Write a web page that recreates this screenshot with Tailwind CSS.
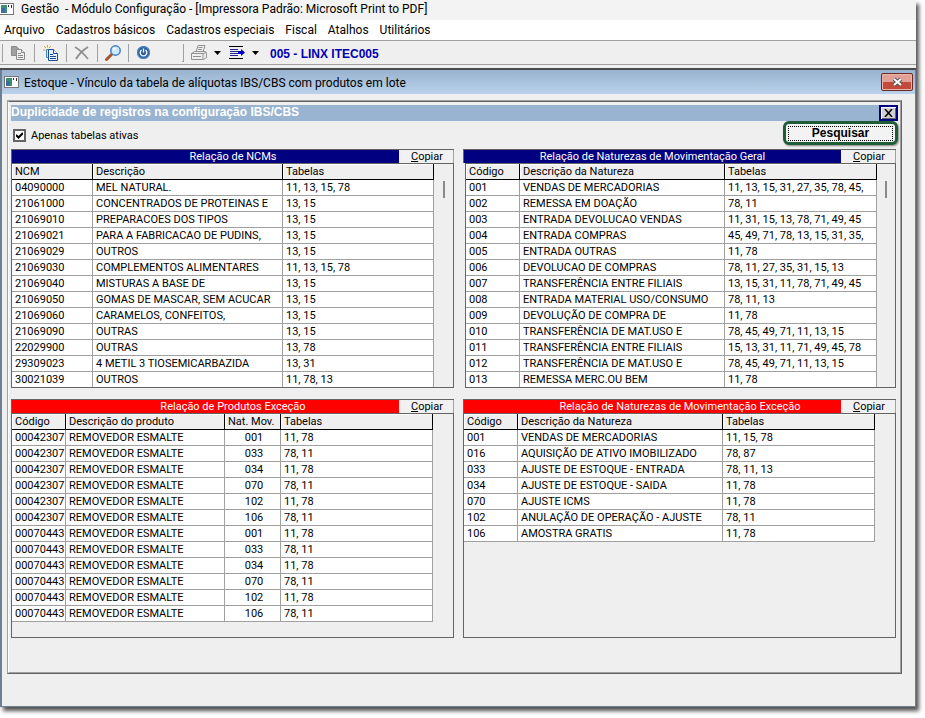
<!DOCTYPE html>
<html lang="pt-BR">

<head>
    <meta charset="UTF-8">
    <meta name="viewport" content="width=device-width, initial-scale=1.0">
    <title>Gestão - Módulo Configuração</title>
    <script src="https://cdn.jsdelivr.net/npm/@tailwindcss/browser@4"></script>
</head>

<body class="bg-white pr-[9px] pb-[10px] font-[Roboto,'Liberation_Sans',sans-serif] text-[11px] leading-[15px] text-black">
    <div class="bg-[#efefef] shadow-[3px_4px_4px_#555]">
        <!-- Title bar -->
        <header class="flex h-5 items-center bg-[#f3f3f3] pb-[2px] text-[12px]">
            <svg class="mr-[7px] h-3 w-[14px]" viewBox="1 0 14 12">
                <rect width="15" height="12" fill="#777" />
                <rect x="1" y="1" width="13" height="10" fill="#fff" />
                <rect x="2" y="2" width="6" height="8" fill="#3c8f70" />
                <rect x="2" y="5" width="4" height="5" fill="#3b6e98" />
                <rect x="9" y="2" width="1" height="2" fill="#333" />
                <rect x="12" y="2" width="1" height="3" fill="#333" />
            </svg>
            <h1 class="whitespace-pre">Gestão  - Módulo Configuração - [Impressora Padrão: Microsoft Print to PDF]</h1>
        </header>

        <!-- Menu -->
        <nav class="flex h-5 items-center gap-[11px] bg-white pl-1 text-[12px]">
            <a href="#">Arquivo</a>
            <a href="#">Cadastros básicos</a>
            <a href="#">Cadastros especiais</a>
            <a href="#">Fiscal</a>
            <a href="#">Atalhos</a>
            <a href="#">Utilitários</a>
        </nav>

        <!-- Toolbar -->
        <div class="flex h-[25px] items-center border-t border-b border-[#a0a0a0] pl-[2px]">
            <div class="h-[18px] w-px bg-[#a0a0a0]"></div>
            <button class="ml-[7px]" aria-label="Copiar">
                <svg class="h-4 w-4" viewBox="0 0 16 16" fill="#efefef" stroke="#8a8a8a">
                    <path d="M1.500 1.500h5l2 2v7h-7z" fill="#a0a0a0" />
                    <path d="M6.500 4.500h5l3 3v7h-8z" />
                    <path d="M11.500 4.500v3h3M8 8.500h3M8 10.500h5M8 12.500h5" />
                </svg>
            </button>
            <div class="ml-[8px] h-[18px] w-px bg-[#a0a0a0]"></div>
            <button class="ml-[8px]" aria-label="Novo">
                <svg class="h-4 w-4" viewBox="0 0 16 16" fill="#fff" stroke="#1c4d9c">
                    <path d="M3.500 4.500h4v8h-4z" fill="#cfe4f7" stroke="#4a86c0" />
                    <path d="M5.500 4.500h5l4 4v7h-9z" fill="#e4f1fc" />
                    <path d="M10.500 4.500v4h4M7 9.500h3M7 11.500h6M7 13.500h6" />
                    <path d="M1 1l2 2M4.500 0v2.500M0 5h2.500M8 1L6 3" stroke="#d9a520" />
                </svg>
            </button>
            <div class="ml-[7px] h-[18px] w-px bg-[#a0a0a0]"></div>
            <button class="ml-[7px]" aria-label="Excluir">
                <svg class="h-4 w-4" viewBox="0 0 16 16" fill="none" stroke="#8e8e8e">
                    <path d="M1 2c5 3 9 7 13 12" stroke-width="1.500" />
                    <path d="M14 2C9 5 5 9 2 14" stroke-width="2" />
                </svg>
            </button>
            <div class="ml-[7px] h-[18px] w-px bg-[#a0a0a0]"></div>
            <button class="ml-[7px]" aria-label="Procurar">
                <svg class="h-4 w-4" viewBox="0 0 16 16">
                    <path d="M1.500 14.500l5-5" stroke="#a5562c" stroke-width="3" stroke-linecap="round" />
                    <circle cx="10.500" cy="5.500" r="4.700" fill="#cdeafa" stroke="#3e7fc8" stroke-width="1.500" />
                    <path d="M8.500 5a2.500 2.500 0 0 1 2-2" stroke="#fff" stroke-width="1.500" fill="none" />
                </svg>
            </button>
            <div class="ml-[7px] h-[18px] w-px bg-[#a0a0a0]"></div>
            <button class="ml-[8px]" aria-label="Sair">
                <svg class="h-[13px] w-[13px]" viewBox="0 0 13 13" fill="none" stroke="#fff" stroke-width="1.300">
                    <circle cx="6.500" cy="6.500" r="6" fill="#2d639f" stroke="#4f81b4" />
                    <path d="M4.500 4a3.300 3.300 0 1 0 4 0M6.500 2.500v4" />
                </svg>
            </button>
            <div class="ml-[32px] h-[18px] w-[2px] border-r border-b border-[#a0a0a0]"></div>
            <button class="ml-[7px] flex items-center gap-[7px]" aria-label="Imprimir">
                <svg class="h-4 w-4" viewBox="0 0 16 16" fill="#efefef" stroke="#909090">
                    <path d="M5 7l2-6.500h7L12 7" />
                    <path d="M.5 8.500l3-2h11l1 2v4l-3 2h-12z" />
                    <path d="M.5 8.500h11.500l3.500-1M12 8.500V14M2 11.500h8M7.500 2.500h4M7 4.500h4" />
                </svg>
                <svg class="h-1 w-[7px]" viewBox="0 0 7 4"><path d="M0 0h7L3.500 4z" /></svg>
            </button>
            <button class="ml-[8px] flex items-center gap-[7px]" aria-label="Exportar">
                <svg class="h-[13px] w-4" viewBox="0 0 16 13" stroke="#000">
                    <path d="M0 .5h14M0 12.500h14" />
                    <path d="M1 3.500h8M1 5.500h8M1 7.500h8M1 9.500h8" stroke="#22228c" />
                    <path d="M9 5h3V3l4 3.500-4 3.500V8H9z" fill="#0000c8" stroke="none" />
                </svg>
                <svg class="h-1 w-[7px]" viewBox="0 0 7 4"><path d="M0 0h7L3.500 4z" /></svg>
            </button>
            <strong class="ml-[11px] pt-[3px] font-['Liberation_Sans',sans-serif] text-[12px] text-[#0000b4]">005 - LINX ITEC005</strong>
        </div>
        <div class="h-[5px] border-b-2 border-[#4a4a4a] bg-[#efefef]"></div>

        <!-- Child window -->
        <main class="border-r border-b border-l-2 border-[#6e7f90] bg-[#efefef] pb-[32px]">
            <div class="flex h-[24px] items-center bg-linear-to-b from-[#98b2cf] to-[#bad2eb] pr-[2px] pl-[2px]">
                <svg class="mr-[5px] h-3 w-[15px]" viewBox="0 0 15 12">
                    <rect width="15" height="12" fill="#777" />
                    <rect x="1" y="1" width="13" height="10" fill="#fff" />
                    <rect x="2" y="2" width="6" height="8" fill="#3c8f70" />
                    <rect x="2" y="5" width="4" height="5" fill="#3b6e98" />
                    <rect x="9" y="2" width="1" height="2" fill="#333" />
                    <rect x="12" y="2" width="1" height="3" fill="#333" />
                </svg>
                <h2 class="grow pt-[2px] text-[12px]">Estoque - Vínculo da tabela de alíquotas IBS/CBS com produtos em lote</h2>
                <button class="flex h-[18px] w-8 items-center justify-center rounded-xs border border-[#6b2a28] bg-linear-to-b from-[#e3a196] from-50% to-[#c14a3a] to-50% shadow-[inset_0_0_0_1px_#f0b5aa]" aria-label="Fechar janela">
                    <svg class="h-[10px] w-[11px]" viewBox="0 0 11 10" fill="none">
                        <path d="M2 2l7 6M9 2l-7 6" stroke="#565656" stroke-width="4" />
                        <path d="M2 2l7 6M9 2l-7 6" stroke="#fff" stroke-width="2" />
                    </svg>
                </button>
            </div>

            <div class="mt-[6px] mr-[13px] ml-[5px] border border-t-[#a0a0a0] border-r-[#646464] border-b-[#646464] border-l-[#a0a0a0]">
                <div class="border border-t-[#646464] border-r-[#a0a0a0] border-b-[#a0a0a0] border-l-white pt-[3px] pr-[2px] pb-[34px] pl-[2px]">
                    <div class="flex h-4 justify-between bg-[#99b4d1]">
                        <h3 class="font-['Liberation_Sans',sans-serif] text-[12px] font-bold text-white">Duplicidade de registros na configuração IBS/CBS</h3>
                        <button class="flex w-[19px] items-center justify-center border-2 border-[#000080] bg-[#d0d0d0] shadow-[inset_1px_1px_#fff,inset_-1px_-1px_#646464]" aria-label="Fechar">
                            <svg class="h-[8px] w-[9px]" viewBox="0 0 9 8" stroke="#000" stroke-width="1.500"><path d="M1 0l7 8M8 0L1 8" /></svg>
                        </button>
                    </div>

                    <div class="flex h-7 items-center justify-between pl-[2px]">
                        <label class="relative flex items-center gap-[5px]">
                            <input type="checkbox" checked class="peer h-[13px] w-[13px] appearance-none border-2 border-[#646464] bg-white">
                            <svg class="absolute left-[3px] hidden h-[7px] w-[7px] peer-checked:block" viewBox="0 0 7 7" fill="none" stroke="#000" stroke-width="2"><path d="M0 3l2.500 2.500L7 1" /></svg>
                            Apenas tabelas ativas
                        </label>
                        <button class="mb-[4px] h-[24px] w-[115px] rounded-md border-3 border-[#1f5c38] bg-[#f3f3f3] p-[2px] shadow-[1px_1px_2px_#888]">
                            <span class="block border border-dotted border-black font-['Liberation_Sans',sans-serif] text-[12px] leading-[13px] font-bold">Pesquisar</span>
                        </button>
                    </div>

                    <div id="grids" class="mr-[2px] grid grid-cols-[443fr_433fr] gap-x-[9px] gap-y-[11px]"></div>
                </div>
            </div>
        </main>
    </div>

    <script>
        const removedor = "REMOVEDOR ESMALTE";

        const grids = [
            {
                title: "Relação de NCMs", color: "bg-[#000080] pl-[55px]", scroll: true, side: "w-[19px]", inset: "",
                cols: ["w-[81px]", "w-[190px]", ""],
                heads: ["NCM", "Descrição", "Tabelas"],
                rows: [
                    ["04090000", "MEL NATURAL.", "11, 13, 15, 78"],
                    ["21061000", "CONCENTRADOS DE PROTEINAS E", "13, 15"],
                    ["21069010", "PREPARACOES DOS TIPOS", "13, 15"],
                    ["21069021", "PARA A FABRICACAO DE PUDINS,", "13, 15"],
                    ["21069029", "OUTROS", "13, 15"],
                    ["21069030", "COMPLEMENTOS ALIMENTARES", "11, 13, 15, 78"],
                    ["21069040", "MISTURAS A BASE DE", "13, 15"],
                    ["21069050", "GOMAS DE MASCAR, SEM ACUCAR", "13, 15"],
                    ["21069060", "CARAMELOS, CONFEITOS,", "13, 15"],
                    ["21069090", "OUTRAS", "13, 15"],
                    ["22029900", "OUTRAS", "13, 78"],
                    ["29309023", "4 METIL 3 TIOSEMICARBAZIDA", "13, 31"],
                    ["30021039", "OUTROS", "11, 78, 13"]
                ]
            },
            {
                title: "Relação de Naturezas de Movimentação Geral", color: "bg-[#000080]", scroll: true, side: "w-[18px]", inset: "ml-[2px]",
                cols: ["w-[54px]", "w-[205px]", ""],
                heads: ["Código", "Descrição da Natureza", "Tabelas"],
                rows: [
                    ["001", "VENDAS DE MERCADORIAS", "11, 13, 15, 31, 27, 35, 78, 45,"],
                    ["002", "REMESSA EM DOAÇÃO", "78, 11"],
                    ["003", "ENTRADA DEVOLUCAO VENDAS", "11, 31, 15, 13, 78, 71, 49, 45"],
                    ["004", "ENTRADA COMPRAS", "45, 49, 71, 78, 13, 15, 31, 35,"],
                    ["005", "ENTRADA OUTRAS", "11, 78"],
                    ["006", "DEVOLUCAO DE COMPRAS", "78, 11, 27, 35, 31, 15, 13"],
                    ["007", "TRANSFERÊNCIA ENTRE FILIAIS", "13, 15, 31, 11, 78, 71, 49, 45"],
                    ["008", "ENTRADA MATERIAL USO/CONSUMO", "78, 11, 13"],
                    ["009", "DEVOLUÇÃO DE COMPRA DE", "11, 78"],
                    ["010", "TRANSFERÊNCIA DE MAT.USO E", "78, 45, 49, 71, 11, 13, 15"],
                    ["011", "TRANSFERÊNCIA ENTRE FILIAIS", "15, 13, 31, 11, 71, 49, 45, 78"],
                    ["012", "TRANSFERÊNCIA DE MAT.USO E", "78, 45, 49, 71, 11, 13, 15"],
                    ["013", "REMESSA MERC.OU BEM", "11, 78"]
                ]
            },
            {
                title: "Relação de Produtos Exceção", color: "bg-[#ff0000] pl-[55px]", scroll: false, side: "w-[20px]", inset: "",
                cols: ["w-[54px]", "w-[159px]", "w-[56px]", ""], center: 2,
                heads: ["Código", "Descrição do produto", "Nat. Mov.", "Tabelas"],
                rows: [
                    ["00042307", removedor, "001", "11, 78"],
                    ["00042307", removedor, "033", "78, 11"],
                    ["00042307", removedor, "034", "11, 78"],
                    ["00042307", removedor, "070", "78, 11"],
                    ["00042307", removedor, "102", "11, 78"],
                    ["00042307", removedor, "106", "78, 11"],
                    ["00070443", removedor, "001", "11, 78"],
                    ["00070443", removedor, "033", "78, 11"],
                    ["00070443", removedor, "034", "11, 78"],
                    ["00070443", removedor, "070", "78, 11"],
                    ["00070443", removedor, "102", "11, 78"],
                    ["00070443", removedor, "106", "78, 11"]
                ]
            },
            {
                title: "Relação de Naturezas de Movimentação Exceção", color: "bg-[#ff0000] pl-[55px]", scroll: false, side: "w-[20px]", inset: "",
                cols: ["w-[54px]", "w-[205px]", ""],
                heads: ["Código", "Descrição da Natureza", "Tabelas"],
                rows: [
                    ["001", "VENDAS DE MERCADORIAS", "11, 15, 78"],
                    ["016", "AQUISIÇÃO DE ATIVO IMOBILIZADO", "78, 87"],
                    ["033", "AJUSTE DE ESTOQUE - ENTRADA", "78, 11, 13"],
                    ["034", "AJUSTE DE ESTOQUE - SAIDA", "11, 78"],
                    ["070", "AJUSTE ICMS", "11, 78"],
                    ["102", "ANULAÇÃO DE OPERAÇÃO - AJUSTE", "78, 11"],
                    ["106", "AMOSTRA GRATIS", "11, 78"]
                ]
            }
        ];

        function cell(text, i, grid) {
            const align = grid.center === i ? "text-center" : "";
            return `<td class="h-4 overflow-hidden border-r border-b border-[#a0a0a0] bg-white pl-[3px] leading-[15px] whitespace-nowrap ${align}">${text}</td>`;
        }

        document.getElementById("grids").innerHTML = grids.map(grid => `
            <section class="min-w-0">
                <div class="flex h-[14px] border-t border-l border-[#646464]">
                    <h4 class="grow text-center leading-[14px] text-white ${grid.color}">${grid.title}</h4>
                    <button class="w-[55px] border-r border-[#a0a0a0] bg-[#f1f1f1] pl-[2px] text-center leading-[14px]"><u>C</u>opiar</button>
                </div>
                <div class="flex h-[225px] overflow-hidden border border-[#646464] ${grid.inset}">
                    <div class="min-w-0 grow">
                        <table class="w-full table-fixed border-separate border-spacing-0">
                            <thead>
                                <tr>${grid.heads.map((h, i) => `<th class="h-4 border-r border-b border-black bg-[#efefef] pl-[3px] text-left leading-[15px] font-normal whitespace-nowrap shadow-[inset_1px_1px_#fff] ${grid.cols[i]}">${h}</th>`).join("")}</tr>
                            </thead>
                            <tbody>${grid.rows.map(r => `<tr>${r.map((c, i) => cell(c, i, grid)).join("")}</tr>`).join("")}</tbody>
                        </table>
                    </div>
                    <div class="flex shrink-0 justify-center pt-[17px] ${grid.side}">
                        ${grid.scroll ? '<div class="h-[17px] w-[2px] bg-[#8a8a8a]"></div>' : ""}
                    </div>
                </div>
            </section>`).join("");
    </script>
</body>

</html>
